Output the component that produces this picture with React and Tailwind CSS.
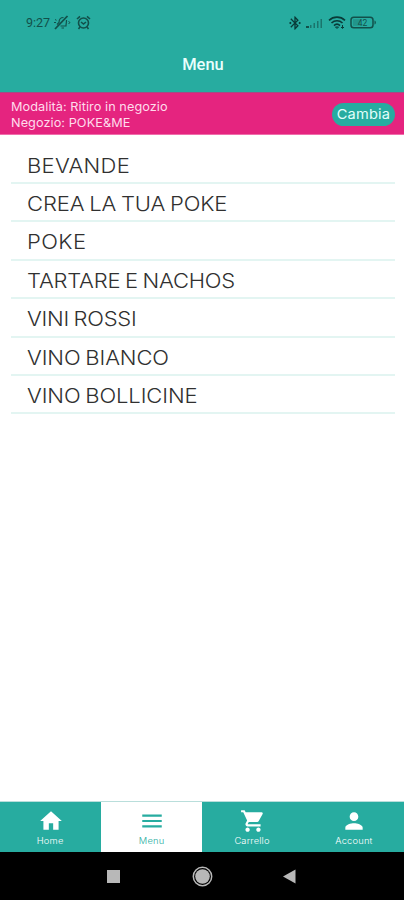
import { MdHome, MdMenu, MdShoppingCart, MdPerson, MdBluetoothConnected } from "react-icons/md";

const categories = [
  { name: "BEVANDE", spacing: "tracking-[0.25px]" },
  { name: "CREA LA TUA POKE", spacing: "tracking-[-0.1px] [word-spacing:-1.2px]" },
  { name: "POKE", spacing: "tracking-[0.35px]" },
  { name: "TARTARE E NACHOS", spacing: "tracking-[-0.2px] [word-spacing:-1.2px]" },
  { name: "VINI ROSSI", spacing: "tracking-[-0.25px] [word-spacing:-1.2px]" },
  { name: "VINO BIANCO", spacing: "tracking-[-0.1px] [word-spacing:-1.2px]" },
  { name: "VINO BOLLICINE", spacing: "tracking-[-0.1px] [word-spacing:-1.2px]" },
];

const tabs = [
  { label: "Home", icon: MdHome },
  { label: "Menu", icon: MdMenu, active: true },
  { label: "Carrello", icon: MdShoppingCart },
  { label: "Account", icon: MdPerson },
];

function StatusBar() {
  return (
    <div className="flex h-[45px] items-center justify-between pl-[26px] pr-[27px] text-[#12504a]">
      <div className="flex items-center">
        <span className="w-[27px] whitespace-nowrap pt-[2px] font-['Roboto'] text-[12.5px] leading-none">9:27</span>
        <svg width="18" height="15" viewBox="0 0 18 15" fill="none" stroke="currentColor" strokeWidth="1.2">
          <path d="M2 14 14.500 1" strokeWidth="1.8" />
          <path d="M4 9.500 6 7.500c0-3 1.500-5 4.500-5M13.500 5c0 2.500-.5 4-.5 6H7.500M8.500 13h2.500" />
          <path d="M1 7.500h2M2 4.500l1.500.8M15.500 6.500l1.500 1-1.500 1.500" strokeWidth="1" />
        </svg>
        <svg className="ml-[5px]" width="15" height="15" viewBox="0 0 15 15" fill="none" stroke="currentColor" strokeWidth="1.6">
          <circle cx="7.5" cy="8" r="5" />
          <path d="M1 4 4 1.300M14 4 11 1.300M5 7l2.500 2L10 7M4 12l-1.500 2M11 12l1.500 2" />
        </svg>
      </div>
      <div className="flex items-center">
        <MdBluetoothConnected size={16} className="text-[#093b38]" />
        <svg className="ml-[2px]" width="20" height="14" viewBox="0 0 20 14" fill="currentColor">
          <rect x="1" y="10" width="3" height="2" />
          <g opacity=".6">
            <rect x="5" y="9" width="1.500" height="3" />
            <rect x="8.500" y="7" width="1.500" height="5" />
            <rect x="12" y="5" width="1.500" height="7" />
            <rect x="15.500" y="3" width="1.500" height="9" />
          </g>
        </svg>
        <svg className="ml-[3px] text-[#093b38]" width="19" height="15" viewBox="0 0 19 15" fill="none" stroke="currentColor" strokeWidth="1.6">
          <path d="M1 5.300c4.500-4.300 11.500-4.300 16 0M3.500 8c3.200-3 7.800-3 11 0M6 10.600c1.800-1.700 4.200-1.700 6 0" />
          <path d="M7.500 12h3L9 13.500zM14.500 10v3M13 12l1.500 1.500L16 12" strokeWidth="1" />
        </svg>
        <svg className="ml-[3px]" width="27" height="13" viewBox="0 0 27 13">
          <rect x="1" y="1.200" width="22" height="10.600" rx="2.800" fill="none" stroke="currentColor" strokeWidth="1.5" />
          <rect x="3" y="3.200" width="7" height="6.600" fill="currentColor" opacity=".25" />
          <path d="M24.500 4.500c1.800.5 1.800 3.500 0 4z" fill="currentColor" />
          <text x="12.500" y="9.500" textAnchor="middle" fontFamily="Roboto" fontSize="8.500" fill="currentColor">42</text>
        </svg>
      </div>
    </div>
  );
}

function TabItem({ label, icon: Icon, active }) {
  return (
    <div
      className={
        active
          ? "flex flex-1 flex-col items-center bg-white pt-[6px] text-[#27aca0]"
          : "flex flex-1 flex-col items-center bg-[#27aca0] pt-[6px] text-white"
      }
    >
      <Icon size={26} />
      <span className="mt-[2px] scale-x-110 text-[8.5px] font-light leading-[11px] tracking-[0.15px]">{label}</span>
    </div>
  );
}

function App() {
  return (
    <div className="flex h-[900px] w-[404px] flex-col overflow-hidden bg-white font-['Inter',sans-serif]">
      <header className="h-[92px] shrink-0 bg-[#27aca0]">
        <StatusBar />
        <h1 className="pl-[2px] pt-[8px] text-center font-['Roboto'] text-[16.5px] font-medium leading-[24px] text-[#e9fffc]">Menu</h1>
      </header>

      <div className="flex h-[43px] shrink-0 items-center justify-between border-b border-t border-b-[#f06dab] border-t-[#a34c84] bg-[#e5247f] pl-[11px] pr-[9px] text-[#ffdcec]">
        <div className="origin-left scale-x-[1.06] pt-[2px] text-[12px] leading-[16px]">
          <p className="tracking-[0.05px]">Modalità: Ritiro in negozio</p>
          <p className="tracking-[0.05px]">Negozio: POKE&amp;ME</p>
        </div>
        <button className="mt-[2px] h-[23px] w-[63px] rounded-full bg-[#27aca0] text-[#e3fffb]">
          <span className="block scale-x-[1.08] text-[13.5px] leading-[23px] tracking-[0.2px]">Cambia</span>
        </button>
      </div>

      <main className="flex-1 pl-[11px] pr-[9px] pt-[10.6px]">
        {categories.map((category) => (
          <div key={category.name} className="h-[38.4px] border-b-2 border-[#e3f5f2] pl-[15.5px]">
            <span className={`block origin-left scale-x-110 whitespace-nowrap text-[20px] font-light leading-[41px] text-[#303030] ${category.spacing}`}>
              {category.name}
            </span>
          </div>
        ))}
      </main>

      <nav className="flex h-[51px] shrink-0 border-t border-[#b9dedb]">
        {tabs.map((tab) => (
          <TabItem key={tab.label} {...tab} />
        ))}
      </nav>

      <div className="flex h-[48px] shrink-0 items-center bg-black text-[#b8b8b8]">
        <div className="ml-[107px] h-[13px] w-[13px] bg-current" />
        <svg className="ml-[72px]" width="21" height="21" viewBox="0 0 21 21" fill="none" stroke="currentColor">
          <circle cx="10.500" cy="10.500" r="9.200" strokeWidth="1.500" />
          <circle cx="10.500" cy="10.500" r="7.300" fill="currentColor" stroke="none" />
        </svg>
        <svg className="ml-[70px]" width="13" height="15" viewBox="0 0 13 15" fill="currentColor">
          <path d="M0 7.500 12.500.500v14z" />
        </svg>
      </div>
    </div>
  );
}

export default App;
